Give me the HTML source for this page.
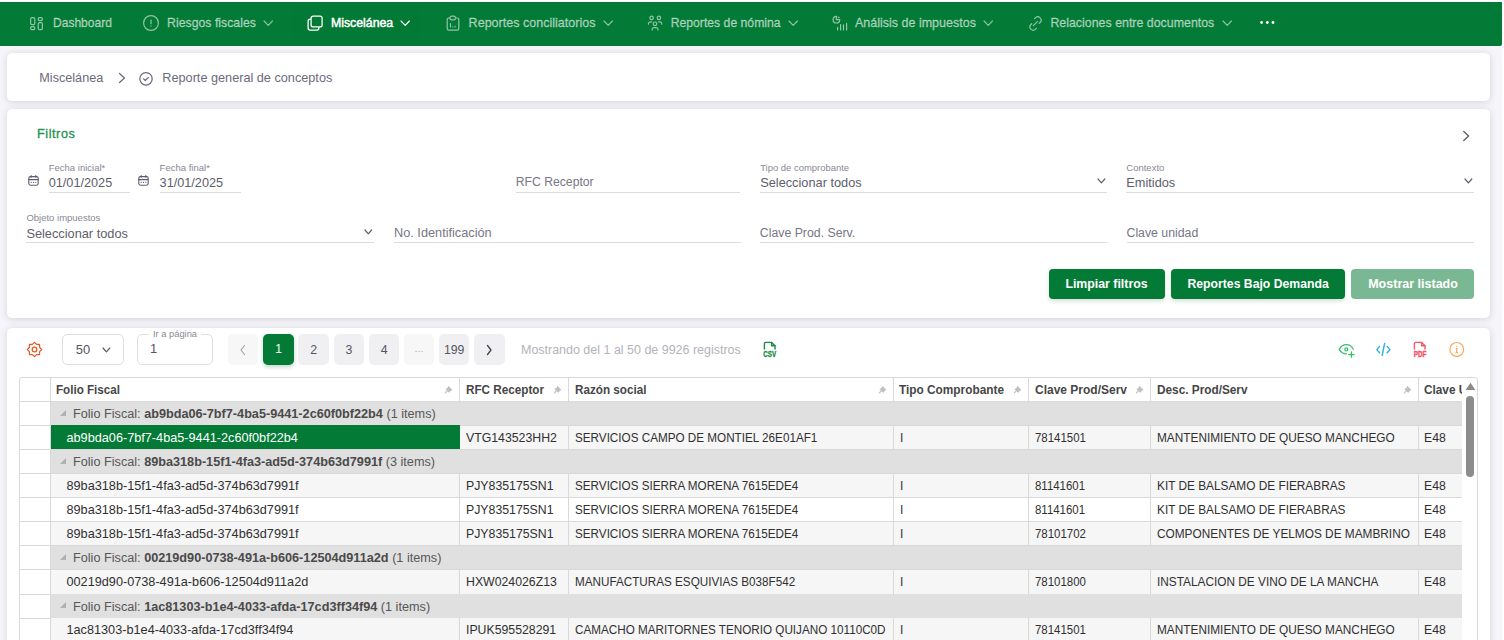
<!DOCTYPE html>
<html><head><meta charset="utf-8"><title>Reporte general de conceptos</title>
<style>
html,body{margin:0;padding:0;}
body{width:1504px;height:640px;overflow:hidden;position:relative;background:#f5f4f8;font-family:"Liberation Sans",sans-serif;}
.t{position:absolute;white-space:nowrap;line-height:1;}
.r{position:absolute;box-sizing:border-box;}
svg.r{overflow:visible;}
</style></head><body>
<div class="r" style="left:0px;top:0px;width:1504.00px;height:640.00px;background:#fff"></div>
<div class="r" style="left:0px;top:2px;width:1502.00px;height:638.00px;background:#f6f5f9"></div>
<div class="r" style="left:0px;top:2px;width:1502.00px;height:44.00px;background:#037b36;border-radius:0 0 2px 0"></div>
<div class="r" style="left:294px;top:6px;width:127.50px;height:34.00px;background:rgba(0,0,0,0.012);border-radius:3px"></div>
<svg class="r" style="left:29px;top:16px;" width="15" height="15" viewBox="0 0 15 15" fill="none"><g stroke="rgba(255,255,255,0.56)" stroke-width="1.2"><rect x="1.6" y="1.6" width="4.2" height="7" rx="1.3"/><rect x="1.6" y="10.6" width="4.2" height="3" rx="1.3"/><rect x="9.2" y="1.6" width="4.2" height="3" rx="1.3"/><rect x="9.2" y="6.6" width="4.2" height="7" rx="1.3"/></g></svg>
<div class="t" style="left:53.00px;top:16.97px;font-size:12.06px;color:rgba(255,255,255,0.56);font-weight:400;-webkit-text-stroke:0.3px rgba(255,255,255,0.56)">Dashboard</div>
<svg class="r" style="left:142px;top:14px;" width="18" height="18" viewBox="0 0 18 18" fill="none"><g stroke="rgba(255,255,255,0.56)" stroke-width="1.2" stroke-linecap="round"><circle cx="9" cy="9" r="7.4"/><path d="M9 6.2 V9.8"/><path d="M9 12.1 V12.2"/></g></svg>
<div class="t" style="left:167.00px;top:16.84px;font-size:12.32px;color:rgba(255,255,255,0.56);font-weight:400;-webkit-text-stroke:0.3px rgba(255,255,255,0.56)">Riesgos fiscales</div>
<svg class="r" style="left:263px;top:19.5px;" width="10.4" height="6.4" viewBox="0 0 10.4 6.4" fill="none"><path d="M1 1 L5.2 5.4 L9.4 1" stroke="rgba(255,255,255,0.56)" stroke-width="1.15" stroke-linecap="round" stroke-linejoin="round"/></svg>
<svg class="r" style="left:306px;top:14px;" width="18" height="18" viewBox="0 0 18 18" fill="none"><g stroke="#fff" stroke-width="1.25"><rect x="5.1" y="2.1" width="11" height="10.8" rx="2"/><path d="M5.1 5.1 H4.1 A2 2 0 0 0 2.1 7.1 V14.1 A2 2 0 0 0 4.1 16.1 H10.9 A2 2 0 0 0 12.9 14.1 V12.9"/></g></svg>
<div class="t" style="left:331.00px;top:16.85px;font-size:12.3px;color:#fff;font-weight:400;-webkit-text-stroke:0.45px #fff">Miscelánea</div>
<svg class="r" style="left:400px;top:19.5px;" width="10.4" height="6.4" viewBox="0 0 10.4 6.4" fill="none"><path d="M1 1 L5.2 5.4 L9.4 1" stroke="#fff" stroke-width="1.15" stroke-linecap="round" stroke-linejoin="round"/></svg>
<svg class="r" style="left:445px;top:14px;" width="16" height="18" viewBox="0 0 16 18" fill="none"><g stroke="rgba(255,255,255,0.56)" stroke-width="1.2" stroke-linecap="round"><path d="M4.5 4 H3.8 A1.6 1.6 0 0 0 2.2 5.6 V14.6 A1.6 1.6 0 0 0 3.8 16.2 H12.2 A1.6 1.6 0 0 0 13.8 14.6 V5.6 A1.6 1.6 0 0 0 12.2 4 H11.5"/><rect x="5" y="2.2" width="5.4" height="3.6" rx="1.6"/><path d="M5.5 9.6 V12.9 M7.8 12.9 V12.9 M10 12.2 V12.9"/></g></svg>
<div class="t" style="left:468.60px;top:16.73px;font-size:12.55px;color:rgba(255,255,255,0.56);font-weight:400;-webkit-text-stroke:0.3px rgba(255,255,255,0.56)">Reportes conciliatorios</div>
<svg class="r" style="left:603px;top:19.5px;" width="10.4" height="6.4" viewBox="0 0 10.4 6.4" fill="none"><path d="M1 1 L5.2 5.4 L9.4 1" stroke="rgba(255,255,255,0.56)" stroke-width="1.15" stroke-linecap="round" stroke-linejoin="round"/></svg>
<svg class="r" style="left:646px;top:14px;" width="18" height="18" viewBox="0 0 18 18" fill="none"><g stroke="rgba(255,255,255,0.56)" stroke-width="1.2" stroke-linecap="round"><circle cx="5.6" cy="3.9" r="1.7"/><circle cx="12.9" cy="3.9" r="1.7"/><circle cx="9" cy="9.8" r="1.8"/><path d="M2.4 10.2 A2.2 2.2 0 0 1 4.8 7.8 H5.6"/><path d="M12.6 7.8 H13.4 A2.2 2.2 0 0 1 15.8 10.2"/><path d="M6.2 16 V15.4 A1.8 1.8 0 0 1 8 13.6 H10.2 A1.8 1.8 0 0 1 12 15.4 V16"/></g></svg>
<div class="t" style="left:670.70px;top:16.89px;font-size:12.21px;color:rgba(255,255,255,0.56);font-weight:400;-webkit-text-stroke:0.3px rgba(255,255,255,0.56)">Reportes de nómina</div>
<svg class="r" style="left:787.5px;top:19.5px;" width="10.4" height="6.4" viewBox="0 0 10.4 6.4" fill="none"><path d="M1 1 L5.2 5.4 L9.4 1" stroke="rgba(255,255,255,0.56)" stroke-width="1.15" stroke-linecap="round" stroke-linejoin="round"/></svg>
<svg class="r" style="left:831px;top:14px;" width="18" height="18" viewBox="0 0 18 18" fill="none"><g stroke="rgba(255,255,255,0.56)" stroke-width="1.2" stroke-linecap="round"><path d="M5.4 2.4 A3.3 3.3 0 1 0 8.7 5.7 H5.4 Z"/><path d="M7.4 3 V3.5 H8.2"/><path d="M6.6 13.4 V15.9 M9.6 10.6 V15.9 M12.5 10.8 V15.9 M15.6 9.4 V15.9"/></g></svg>
<div class="t" style="left:855.00px;top:16.75px;font-size:12.51px;color:rgba(255,255,255,0.56);font-weight:400;-webkit-text-stroke:0.3px rgba(255,255,255,0.56)">Análisis de impuestos</div>
<svg class="r" style="left:983px;top:19.5px;" width="10.4" height="6.4" viewBox="0 0 10.4 6.4" fill="none"><path d="M1 1 L5.2 5.4 L9.4 1" stroke="rgba(255,255,255,0.56)" stroke-width="1.15" stroke-linecap="round" stroke-linejoin="round"/></svg>
<svg class="r" style="left:1027px;top:15px;" width="17" height="17" viewBox="0 0 17 17" fill="none"><g stroke="rgba(255,255,255,0.56)" stroke-width="1.2" stroke-linecap="round"><path d="M6.3 10.7 L10.7 6.3"/><path d="M7.6 3.6 L8.4 2.8 A3.3 3.3 0 0 1 13.1 7.5 L12.3 8.3"/><path d="M9.4 13.4 L8.6 14.2 A3.3 3.3 0 0 1 3.9 9.5 L4.7 8.7"/></g></svg>
<div class="t" style="left:1050.40px;top:16.80px;font-size:12.4px;color:rgba(255,255,255,0.56);font-weight:400;-webkit-text-stroke:0.3px rgba(255,255,255,0.56)">Relaciones entre documentos</div>
<svg class="r" style="left:1222px;top:19.5px;" width="10.4" height="6.4" viewBox="0 0 10.4 6.4" fill="none"><path d="M1 1 L5.2 5.4 L9.4 1" stroke="rgba(255,255,255,0.56)" stroke-width="1.15" stroke-linecap="round" stroke-linejoin="round"/></svg>
<svg class="r" style="left:1259px;top:20px;" width="17" height="5" viewBox="0 0 17 5" fill="none"><g fill="#fff"><circle cx="2.6" cy="2.5" r="1.4"/><circle cx="8.3" cy="2.5" r="1.4"/><circle cx="14" cy="2.5" r="1.4"/></g></svg>
<div class="r" style="left:7px;top:53px;width:1483.00px;height:48.00px;background:#fff;border-radius:5px;box-shadow:0 1px 7px rgba(40,40,70,0.17)"></div>
<div class="t" style="left:39.30px;top:72.17px;font-size:12.65px;color:#6c6a7d;font-weight:400;">Miscelánea</div>
<svg class="r" style="left:116px;top:71px;" width="12" height="14" viewBox="0 0 12 14" fill="none"><path d="M3.5 2.5 L8.5 7 L3.5 11.5" stroke="#6c6a7d" stroke-width="1.3" stroke-linecap="round" stroke-linejoin="round"/></svg>
<svg class="r" style="left:138px;top:71px;" width="16" height="16" viewBox="0 0 16 16" fill="none"><g stroke="#6c6a7d" stroke-width="1.25" stroke-linecap="round" stroke-linejoin="round"><circle cx="8" cy="7.8" r="6.2"/><path d="M5.6 7.9 L7.3 9.5 L10.4 6.4"/></g></svg>
<div class="t" style="left:162.30px;top:72.16px;font-size:12.69px;color:#6c6a7d;font-weight:400;">Reporte general de conceptos</div>
<div class="r" style="left:7px;top:109px;width:1483.00px;height:209.00px;background:#fff;border-radius:5px;box-shadow:0 1px 7px rgba(40,40,70,0.17)"></div>
<div class="t" style="left:37.00px;top:127.95px;font-size:12.7px;color:#23924f;font-weight:400;-webkit-text-stroke:0.3px #23924f;letter-spacing:0.55px">Filtros</div>
<svg class="r" style="left:1460px;top:129px;" width="12" height="14" viewBox="0 0 12 14" fill="none"><path d="M3.8 2.5 L8.6 7 L3.8 11.5" stroke="#5a5a66" stroke-width="1.3" stroke-linecap="round" stroke-linejoin="round"/></svg>
<svg class="r" style="left:27.5px;top:174.5px;" width="11" height="11" viewBox="0 0 11 11" fill="none"><g stroke="#5e5d6c" stroke-width="1.1" stroke-linecap="round"><rect x="0.8" y="1.6" width="9.4" height="8.6" rx="1.6"/><path d="M0.8 4.6 H10.2"/><path d="M3.2 0.6 V2.2 M7.8 0.6 V2.2"/><path d="M3.2 7.2 V7.5 M5.5 7.2 V7.5 M7.8 7.2 V7.5"/></g></svg>
<div class="t" style="left:48.70px;top:162.83px;font-size:9.53px;color:#8a8896;font-weight:400;">Fecha inicial*</div>
<div class="t" style="left:48.70px;top:177.46px;font-size:12.69px;color:#5e5d6c;font-weight:400;">01/01/2025</div>
<div class="r" style="left:48.7px;top:192px;width:81.30px;height:1.00px;background:#dcdcdf"></div>
<svg class="r" style="left:137.5px;top:174.5px;" width="11" height="11" viewBox="0 0 11 11" fill="none"><g stroke="#5e5d6c" stroke-width="1.1" stroke-linecap="round"><rect x="0.8" y="1.6" width="9.4" height="8.6" rx="1.6"/><path d="M0.8 4.6 H10.2"/><path d="M3.2 0.6 V2.2 M7.8 0.6 V2.2"/><path d="M3.2 7.2 V7.5 M5.5 7.2 V7.5 M7.8 7.2 V7.5"/></g></svg>
<div class="t" style="left:159.60px;top:162.83px;font-size:9.53px;color:#8a8896;font-weight:400;">Fecha final*</div>
<div class="t" style="left:159.60px;top:177.46px;font-size:12.69px;color:#5e5d6c;font-weight:400;">31/01/2025</div>
<div class="r" style="left:159.6px;top:192px;width:81.40px;height:1.00px;background:#dcdcdf"></div>
<div class="t" style="left:515.70px;top:176.00px;font-size:12.21px;color:#777686;font-weight:400;">RFC Receptor</div>
<div class="r" style="left:515.7px;top:192px;width:224.80px;height:1.00px;background:#dcdcdf"></div>
<div class="t" style="left:760.20px;top:162.88px;font-size:9.45px;color:#8a8896;font-weight:400;">Tipo de comprobante</div>
<div class="t" style="left:760.20px;top:177.22px;font-size:12.77px;color:#5e5d6c;font-weight:400;">Seleccionar todos</div>
<svg class="r" style="left:1096.8px;top:177.5px;" width="8.8" height="5.8" viewBox="0 0 8.8 5.8" fill="none"><path d="M1 1 L4.4 4.8 L7.8 1" stroke="#5e5d6c" stroke-width="1.2" stroke-linecap="round" stroke-linejoin="round"/></svg>
<div class="r" style="left:760.2px;top:192px;width:346.50px;height:1.00px;background:#dcdcdf"></div>
<div class="t" style="left:1126.30px;top:162.85px;font-size:9.5px;color:#8a8896;font-weight:400;">Contexto</div>
<div class="t" style="left:1126.30px;top:177.21px;font-size:12.78px;color:#5e5d6c;font-weight:400;">Emitidos</div>
<svg class="r" style="left:1464.2px;top:177.5px;" width="8.8" height="5.8" viewBox="0 0 8.8 5.8" fill="none"><path d="M1 1 L4.4 4.8 L7.8 1" stroke="#5e5d6c" stroke-width="1.2" stroke-linecap="round" stroke-linejoin="round"/></svg>
<div class="r" style="left:1126.3px;top:192px;width:347.70px;height:1.00px;background:#dcdcdf"></div>
<div class="t" style="left:26.40px;top:213.15px;font-size:9.51px;color:#8a8896;font-weight:400;">Objeto impuestos</div>
<div class="t" style="left:26.40px;top:227.81px;font-size:12.77px;color:#5e5d6c;font-weight:400;">Seleccionar todos</div>
<svg class="r" style="left:364px;top:228.5px;" width="8.6" height="5.8" viewBox="0 0 8.6 5.8" fill="none"><path d="M1 1 L4.3 4.8 L7.6 1" stroke="#5e5d6c" stroke-width="1.2" stroke-linecap="round" stroke-linejoin="round"/></svg>
<div class="r" style="left:26.4px;top:242px;width:347.20px;height:1.00px;background:#dcdcdf"></div>
<div class="t" style="left:394.00px;top:227.43px;font-size:12.74px;color:#777686;font-weight:400;">No. Identificación</div>
<div class="r" style="left:394px;top:242px;width:346.50px;height:1.00px;background:#dcdcdf"></div>
<div class="t" style="left:759.80px;top:227.15px;font-size:12.3px;color:#777686;font-weight:400;">Clave Prod. Serv.</div>
<div class="r" style="left:759.8px;top:242px;width:347.40px;height:1.00px;background:#dcdcdf"></div>
<div class="t" style="left:1126.50px;top:227.15px;font-size:12.3px;color:#777686;font-weight:400;">Clave unidad</div>
<div class="r" style="left:1126.5px;top:242px;width:347.50px;height:1.00px;background:#dcdcdf"></div>
<div class="r" style="left:1049px;top:269px;width:115.80px;height:30.00px;background:#037b36;border-radius:4px;box-shadow:0 2px 4px rgba(0,80,30,0.18)"></div><div class="t" style="left:1065.40px;top:278.23px;font-size:12.34px;color:#fff;font-weight:700;">Limpiar filtros</div>
<div class="r" style="left:1171px;top:269px;width:173.60px;height:30.00px;background:#037b36;border-radius:4px;box-shadow:0 2px 4px rgba(0,80,30,0.18)"></div><div class="t" style="left:1187.50px;top:278.29px;font-size:12.22px;color:#fff;font-weight:700;">Reportes Bajo Demanda</div>
<div class="r" style="left:1351.2px;top:269px;width:122.70px;height:30.00px;background:#7ab893;border-radius:4px;"></div><div class="t" style="left:1368.20px;top:278.13px;font-size:12.53px;color:#fff;font-weight:700;">Mostrar listado</div>
<div class="r" style="left:7px;top:328px;width:1483.00px;height:372.00px;background:#fff;border-radius:5px;box-shadow:0 1px 7px rgba(40,40,70,0.17)"></div>
<svg class="r" style="left:26px;top:341px;" width="17" height="17" viewBox="0 0 17 17" fill="none"><path d="M8.5 1.4 L10.6 3.4 L13.5 3.5 L13.6 6.4 L15.6 8.5 L13.6 10.6 L13.5 13.5 L10.6 13.6 L8.5 15.6 L6.4 13.6 L3.5 13.5 L3.4 10.6 L1.4 8.5 L3.4 6.4 L3.5 3.5 L6.4 3.4 Z" stroke="#e85a28" stroke-width="1.3" stroke-linejoin="round"/><circle cx="8.5" cy="8.5" r="2.3" stroke="#e85a28" stroke-width="1.3"/></svg>
<div class="r" style="left:62.3px;top:334.4px;width:61.40px;height:30.30px;border:1px solid #dedee2;border-radius:5px;background:#fff"></div>
<div class="t" style="left:75.80px;top:343.62px;font-size:12.95px;color:#55555f;font-weight:400;">50</div>
<svg class="r" style="left:102.2px;top:347px;" width="8.8" height="5.8" viewBox="0 0 8.8 5.8" fill="none"><path d="M1 1 L4.4 4.8 L7.8 1" stroke="#55555f" stroke-width="1.15" stroke-linecap="round" stroke-linejoin="round"/></svg>
<div class="r" style="left:137.3px;top:334.4px;width:75.30px;height:30.30px;border:1px solid #dedee2;border-radius:5px;background:#fff"></div>
<div class="r" style="left:149px;top:330px;width:52.00px;height:8.00px;background:#fff"></div>
<div class="t" style="left:152.90px;top:330.32px;font-size:9.35px;color:#8a8a94;font-weight:400;">Ir a página</div>
<div class="t" style="left:150.00px;top:343.22px;font-size:12.95px;color:#55555f;font-weight:400;">1</div>
<div class="r" style="left:228px;top:334.4px;width:30.40px;height:30.50px;background:#f7f7f8;border-radius:5px"></div>
<svg class="r" style="left:238px;top:343px;" width="10" height="14" viewBox="0 0 10 14" fill="none"><path d="M6.5 2.5 L3 7 L6.5 11.5" stroke="#a6a6ae" stroke-width="1.2" stroke-linecap="round" stroke-linejoin="round"/></svg>
<div class="r" style="left:263.3px;top:334.4px;width:30.40px;height:30.50px;background:#037b36;border-radius:5px;box-shadow:0 2px 4px rgba(0,90,40,0.25)"></div>
<div class="t" style="left:263.3px;top:342.5px;width:30.4px;text-align:center;font-size:12px;color:#fff">1</div>
<div class="r" style="left:298.4px;top:334.4px;width:30.40px;height:30.50px;background:#f0f0f2;border-radius:5px"></div>
<div class="t" style="left:298.4px;top:343.8px;width:30.4px;text-align:center;font-size:12.3px;color:#55555f">2</div>
<div class="r" style="left:333.7px;top:334.4px;width:30.40px;height:30.50px;background:#f0f0f2;border-radius:5px"></div>
<div class="t" style="left:333.7px;top:343.8px;width:30.4px;text-align:center;font-size:12.3px;color:#55555f">3</div>
<div class="r" style="left:369px;top:334.4px;width:30.40px;height:30.50px;background:#f0f0f2;border-radius:5px"></div>
<div class="t" style="left:369px;top:343.8px;width:30.4px;text-align:center;font-size:12.3px;color:#55555f">4</div>
<div class="r" style="left:403.9px;top:334.4px;width:30.40px;height:30.50px;background:#f7f7f8;border-radius:5px"></div>
<div class="t" style="left:403.9px;top:342.5px;width:30.4px;text-align:center;font-size:11px;color:#b0b0b8">...</div>
<div class="r" style="left:439px;top:334.4px;width:30.40px;height:30.50px;background:#f0f0f2;border-radius:5px"></div>
<div class="t" style="left:439px;top:343.8px;width:30.4px;text-align:center;font-size:12.3px;color:#55555f">199</div>
<div class="r" style="left:474.3px;top:334.4px;width:30.40px;height:30.50px;background:#f0f0f2;border-radius:5px"></div>
<svg class="r" style="left:484.3px;top:343px;" width="10" height="14" viewBox="0 0 10 14" fill="none"><path d="M3.5 2.5 L7 7 L3.5 11.5" stroke="#44444e" stroke-width="1.3" stroke-linecap="round" stroke-linejoin="round"/></svg>
<div class="t" style="left:521.00px;top:343.76px;font-size:12.48px;color:#b3b3bb;font-weight:400;">Mostrando del 1 al 50 de 9926 registros</div>
<svg class="r" style="left:762px;top:341px;" width="16" height="17" viewBox="0 0 16 17" fill="none"><g stroke="#1b8a45" stroke-width="1.4" stroke-linecap="round" stroke-linejoin="round"><path d="M2.4 8 V2.6 A1.2 1.2 0 0 1 3.6 1.4 H9.6 L13 4.8 V8"/><path d="M9.6 1.4 V4.8 H13"/></g><text x="1.2" y="16.2" textLength="13" lengthAdjust="spacingAndGlyphs" font-family="Liberation Sans" font-weight="700" font-size="8.2" fill="#1b8a45" stroke="#1b8a45" stroke-width="0.3">CSV</text></svg>
<svg class="r" style="left:1334px;top:338px;" width="24" height="22" viewBox="0 0 24 22" fill="none"><g stroke="#36c170" stroke-width="1.3" stroke-linecap="round" stroke-linejoin="round"><path d="M12.4 15.9 C9.4 15.9 6.9 14.4 5.2 11.4 C7 8.3 9.5 6.7 12.3 6.7 C15.2 6.7 17.6 8.2 19.3 11.2"/><circle cx="12.3" cy="11.4" r="1.45"/><path d="M17.4 13.9 V19.3 M14.7 16.6 H20.1"/></g></svg>
<svg class="r" style="left:1375px;top:341px;" width="17" height="17" viewBox="0 0 17 17" fill="none"><g stroke="#2bb3d4" stroke-width="1.4" stroke-linecap="round" stroke-linejoin="round"><path d="M4.6 5.4 L1.8 8.6 L4.6 11.8"/><path d="M12.2 5.4 L15 8.6 L12.2 11.8"/><path d="M9.6 2.4 L7.2 14.4"/></g></svg>
<svg class="r" style="left:1412px;top:341px;" width="16" height="17" viewBox="0 0 16 17" fill="none"><g stroke="#f4566a" stroke-width="1.4" stroke-linecap="round" stroke-linejoin="round"><path d="M2.4 8 V2.6 A1.2 1.2 0 0 1 3.6 1.4 H9.6 L13 4.8 V8"/><path d="M9.6 1.4 V4.8 H13"/></g><text x="1.7" y="16.1" textLength="12.6" lengthAdjust="spacingAndGlyphs" font-family="Liberation Sans" font-weight="700" font-size="8.6" fill="#f4566a" stroke="#f4566a" stroke-width="0.45">PDF</text></svg>
<svg class="r" style="left:1448px;top:341px;" width="17" height="17" viewBox="0 0 17 17" fill="none"><g stroke="#f8a75c" stroke-width="1.2" stroke-linecap="round"><circle cx="8.8" cy="8.4" r="6.9"/><path d="M8.8 7.6 V11.4 M8 11.4 H9.6 M8.1 7.6 H8.8"/><path d="M8.8 5.3 V5.35"/></g></svg>
<div class="r" style="left:19px;top:377px;width:1458.50px;height:323.00px;border:1px solid #d9d9d9;border-radius:3px;background:#fff"></div>
<div class="r" style="left:19px;top:401px;width:1443.50px;height:1.00px;background:#d9d9d9"></div>
<div class="r" style="left:49.5px;top:377px;width:1.00px;height:24.00px;background:#d9d9d9"></div>
<div class="r" style="left:459.0px;top:377px;width:1.00px;height:24.00px;background:#d9d9d9"></div>
<div class="r" style="left:568.0px;top:377px;width:1.00px;height:24.00px;background:#d9d9d9"></div>
<div class="r" style="left:892.8px;top:377px;width:1.00px;height:24.00px;background:#d9d9d9"></div>
<div class="r" style="left:1028.0px;top:377px;width:1.00px;height:24.00px;background:#d9d9d9"></div>
<div class="r" style="left:1150.1px;top:377px;width:1.00px;height:24.00px;background:#d9d9d9"></div>
<div class="r" style="left:1417.5px;top:377px;width:1.00px;height:24.00px;background:#d9d9d9"></div>
<div class="t" style="left:56.00px;top:384.05px;font-size:12.5px;color:#464646;font-weight:700;transform:scaleX(0.9304);transform-origin:0 0;">Folio Fiscal</div>
<svg class="r" style="left:445.0px;top:385px;" width="9" height="9" viewBox="0 0 9 9" fill="none"><path d="M3.2 0.8 L7.6 5 L6.2 5.4 L4.6 7.2 L4.4 8 L0.4 4 L1.2 3.8 L2.9 2.3 Z" fill="#c0c0c0"/><path d="M2.2 6 L0.4 7.8" stroke="#c0c0c0" stroke-width="1.2" stroke-linecap="round"/></svg>
<div class="t" style="left:465.50px;top:384.05px;font-size:12.5px;color:#464646;font-weight:700;transform:scaleX(0.9360);transform-origin:0 0;">RFC Receptor</div>
<svg class="r" style="left:554.0px;top:385px;" width="9" height="9" viewBox="0 0 9 9" fill="none"><path d="M3.2 0.8 L7.6 5 L6.2 5.4 L4.6 7.2 L4.4 8 L0.4 4 L1.2 3.8 L2.9 2.3 Z" fill="#c0c0c0"/><path d="M2.2 6 L0.4 7.8" stroke="#c0c0c0" stroke-width="1.2" stroke-linecap="round"/></svg>
<div class="t" style="left:574.50px;top:384.05px;font-size:12.5px;color:#464646;font-weight:700;transform:scaleX(0.9360);transform-origin:0 0;">Razón social</div>
<svg class="r" style="left:878.8px;top:385px;" width="9" height="9" viewBox="0 0 9 9" fill="none"><path d="M3.2 0.8 L7.6 5 L6.2 5.4 L4.6 7.2 L4.4 8 L0.4 4 L1.2 3.8 L2.9 2.3 Z" fill="#c0c0c0"/><path d="M2.2 6 L0.4 7.8" stroke="#c0c0c0" stroke-width="1.2" stroke-linecap="round"/></svg>
<div class="t" style="left:899.30px;top:384.05px;font-size:12.5px;color:#464646;font-weight:700;transform:scaleX(0.9472);transform-origin:0 0;">Tipo Comprobante</div>
<svg class="r" style="left:1014.0px;top:385px;" width="9" height="9" viewBox="0 0 9 9" fill="none"><path d="M3.2 0.8 L7.6 5 L6.2 5.4 L4.6 7.2 L4.4 8 L0.4 4 L1.2 3.8 L2.9 2.3 Z" fill="#c0c0c0"/><path d="M2.2 6 L0.4 7.8" stroke="#c0c0c0" stroke-width="1.2" stroke-linecap="round"/></svg>
<div class="t" style="left:1034.50px;top:384.05px;font-size:12.5px;color:#464646;font-weight:700;transform:scaleX(0.9592);transform-origin:0 0;">Clave Prod/Serv</div>
<svg class="r" style="left:1136.1px;top:385px;" width="9" height="9" viewBox="0 0 9 9" fill="none"><path d="M3.2 0.8 L7.6 5 L6.2 5.4 L4.6 7.2 L4.4 8 L0.4 4 L1.2 3.8 L2.9 2.3 Z" fill="#c0c0c0"/><path d="M2.2 6 L0.4 7.8" stroke="#c0c0c0" stroke-width="1.2" stroke-linecap="round"/></svg>
<div class="t" style="left:1156.60px;top:384.05px;font-size:12.5px;color:#464646;font-weight:700;transform:scaleX(0.9440);transform-origin:0 0;">Desc. Prod/Serv</div>
<svg class="r" style="left:1403.5px;top:385px;" width="9" height="9" viewBox="0 0 9 9" fill="none"><path d="M3.2 0.8 L7.6 5 L6.2 5.4 L4.6 7.2 L4.4 8 L0.4 4 L1.2 3.8 L2.9 2.3 Z" fill="#c0c0c0"/><path d="M2.2 6 L0.4 7.8" stroke="#c0c0c0" stroke-width="1.2" stroke-linecap="round"/></svg>
<div class="r" style="left:1419px;top:378px;width:43.40px;height:23px;overflow:hidden"><div class="t" style="left:5.00px;top:6.05px;font-size:12.5px;color:#464646;font-weight:700;transform:scaleX(0.9440);transform-origin:0 0;">Clave Unidad</div></div>
<div class="r" style="left:1462.4px;top:378px;width:13.80px;height:322.00px;background:#fff"></div>
<div class="r" style="left:50px;top:401.6px;width:1412.40px;height:24.05px;background:#e0e0e0"></div>
<svg class="r" style="left:58.5px;top:408.6px;" width="8" height="8" viewBox="0 0 8 8" fill="none"><path d="M7 1 V7 H1 Z" fill="#b0b0b0"/></svg>
<div class="t" style="left:73.00px;top:408.16px;font-size:12.68px;color:#575757;font-weight:400;">Folio Fiscal: <b style="color:#4a4a4a">ab9bda06-7bf7-4ba5-9441-2c60f0bf22b4</b> (1 items)</div>
<div class="r" style="left:19px;top:425.15000000000003px;width:1443.40px;height:1.00px;background:#d9d9d9"></div>
<div class="r" style="left:50px;top:425.65000000000003px;width:1412.40px;height:24.05px;background:#f6f6f6"></div>
<div class="r" style="left:459.0px;top:425.65000000000003px;width:1.00px;height:24.05px;background:#d9d9d9"></div>
<div class="t" style="left:465.80px;top:432.03px;font-size:12.65px;color:#303030;font-weight:400;transform:scaleX(0.9723);transform-origin:0 0;">VTG143523HH2</div>
<div class="r" style="left:568.0px;top:425.65000000000003px;width:1.00px;height:24.05px;background:#d9d9d9"></div>
<div class="t" style="left:574.80px;top:432.03px;font-size:12.65px;color:#303030;font-weight:400;transform:scaleX(0.9249);transform-origin:0 0;">SERVICIOS CAMPO DE MONTIEL 26E01AF1</div>
<div class="r" style="left:892.8px;top:425.65000000000003px;width:1.00px;height:24.05px;background:#d9d9d9"></div>
<div class="t" style="left:899.60px;top:432.03px;font-size:12.65px;color:#303030;font-weight:400;transform:scaleX(0.9486);transform-origin:0 0;">I</div>
<div class="r" style="left:1028.0px;top:425.65000000000003px;width:1.00px;height:24.05px;background:#d9d9d9"></div>
<div class="t" style="left:1034.80px;top:432.03px;font-size:12.65px;color:#303030;font-weight:400;transform:scaleX(0.9051);transform-origin:0 0;">78141501</div>
<div class="r" style="left:1150.1px;top:425.65000000000003px;width:1.00px;height:24.05px;background:#d9d9d9"></div>
<div class="t" style="left:1156.90px;top:432.03px;font-size:12.65px;color:#303030;font-weight:400;transform:scaleX(0.9360);transform-origin:0 0;">MANTENIMIENTO DE QUESO MANCHEGO</div>
<div class="r" style="left:1417.5px;top:425.65000000000003px;width:1.00px;height:24.05px;background:#d9d9d9"></div>
<div class="t" style="left:1424.30px;top:432.03px;font-size:12.65px;color:#303030;font-weight:400;transform:scaleX(0.9684);transform-origin:0 0;">E48</div>
<div class="r" style="left:19px;top:449.20000000000005px;width:1443.40px;height:1.00px;background:#d9d9d9"></div>
<div class="r" style="left:50px;top:449.70000000000005px;width:1412.40px;height:24.05px;background:#e0e0e0"></div>
<svg class="r" style="left:58.5px;top:456.70000000000005px;" width="8" height="8" viewBox="0 0 8 8" fill="none"><path d="M7 1 V7 H1 Z" fill="#b0b0b0"/></svg>
<div class="t" style="left:73.00px;top:456.26px;font-size:12.68px;color:#575757;font-weight:400;">Folio Fiscal: <b style="color:#4a4a4a">89ba318b-15f1-4fa3-ad5d-374b63d7991f</b> (3 items)</div>
<div class="r" style="left:19px;top:473.25000000000006px;width:1443.40px;height:1.00px;background:#d9d9d9"></div>
<div class="r" style="left:50px;top:473.75000000000006px;width:1412.40px;height:24.05px;background:#f6f6f6"></div>
<div class="t" style="left:66.50px;top:480.10px;font-size:12.7px;color:#303030;font-weight:400;">89ba318b-15f1-4fa3-ad5d-374b63d7991f</div>
<div class="r" style="left:459.0px;top:473.75000000000006px;width:1.00px;height:24.05px;background:#d9d9d9"></div>
<div class="t" style="left:465.80px;top:480.13px;font-size:12.65px;color:#303030;font-weight:400;transform:scaleX(0.9723);transform-origin:0 0;">PJY835175SN1</div>
<div class="r" style="left:568.0px;top:473.75000000000006px;width:1.00px;height:24.05px;background:#d9d9d9"></div>
<div class="t" style="left:574.80px;top:480.13px;font-size:12.65px;color:#303030;font-weight:400;transform:scaleX(0.9249);transform-origin:0 0;">SERVICIOS SIERRA MORENA 7615EDE4</div>
<div class="r" style="left:892.8px;top:473.75000000000006px;width:1.00px;height:24.05px;background:#d9d9d9"></div>
<div class="t" style="left:899.60px;top:480.13px;font-size:12.65px;color:#303030;font-weight:400;transform:scaleX(0.9486);transform-origin:0 0;">I</div>
<div class="r" style="left:1028.0px;top:473.75000000000006px;width:1.00px;height:24.05px;background:#d9d9d9"></div>
<div class="t" style="left:1034.80px;top:480.13px;font-size:12.65px;color:#303030;font-weight:400;transform:scaleX(0.9051);transform-origin:0 0;">81141601</div>
<div class="r" style="left:1150.1px;top:473.75000000000006px;width:1.00px;height:24.05px;background:#d9d9d9"></div>
<div class="t" style="left:1156.90px;top:480.13px;font-size:12.65px;color:#303030;font-weight:400;transform:scaleX(0.9360);transform-origin:0 0;">KIT DE BALSAMO DE FIERABRAS</div>
<div class="r" style="left:1417.5px;top:473.75000000000006px;width:1.00px;height:24.05px;background:#d9d9d9"></div>
<div class="t" style="left:1424.30px;top:480.13px;font-size:12.65px;color:#303030;font-weight:400;transform:scaleX(0.9684);transform-origin:0 0;">E48</div>
<div class="r" style="left:19px;top:497.30000000000007px;width:1443.40px;height:1.00px;background:#d9d9d9"></div>
<div class="r" style="left:50px;top:497.80000000000007px;width:1412.40px;height:24.05px;background:#fff"></div>
<div class="t" style="left:66.50px;top:504.15px;font-size:12.7px;color:#303030;font-weight:400;">89ba318b-15f1-4fa3-ad5d-374b63d7991f</div>
<div class="r" style="left:459.0px;top:497.80000000000007px;width:1.00px;height:24.05px;background:#d9d9d9"></div>
<div class="t" style="left:465.80px;top:504.18px;font-size:12.65px;color:#303030;font-weight:400;transform:scaleX(0.9723);transform-origin:0 0;">PJY835175SN1</div>
<div class="r" style="left:568.0px;top:497.80000000000007px;width:1.00px;height:24.05px;background:#d9d9d9"></div>
<div class="t" style="left:574.80px;top:504.18px;font-size:12.65px;color:#303030;font-weight:400;transform:scaleX(0.9249);transform-origin:0 0;">SERVICIOS SIERRA MORENA 7615EDE4</div>
<div class="r" style="left:892.8px;top:497.80000000000007px;width:1.00px;height:24.05px;background:#d9d9d9"></div>
<div class="t" style="left:899.60px;top:504.18px;font-size:12.65px;color:#303030;font-weight:400;transform:scaleX(0.9486);transform-origin:0 0;">I</div>
<div class="r" style="left:1028.0px;top:497.80000000000007px;width:1.00px;height:24.05px;background:#d9d9d9"></div>
<div class="t" style="left:1034.80px;top:504.18px;font-size:12.65px;color:#303030;font-weight:400;transform:scaleX(0.9051);transform-origin:0 0;">81141601</div>
<div class="r" style="left:1150.1px;top:497.80000000000007px;width:1.00px;height:24.05px;background:#d9d9d9"></div>
<div class="t" style="left:1156.90px;top:504.18px;font-size:12.65px;color:#303030;font-weight:400;transform:scaleX(0.9360);transform-origin:0 0;">KIT DE BALSAMO DE FIERABRAS</div>
<div class="r" style="left:1417.5px;top:497.80000000000007px;width:1.00px;height:24.05px;background:#d9d9d9"></div>
<div class="t" style="left:1424.30px;top:504.18px;font-size:12.65px;color:#303030;font-weight:400;transform:scaleX(0.9684);transform-origin:0 0;">E48</div>
<div class="r" style="left:19px;top:521.35px;width:1443.40px;height:1.00px;background:#d9d9d9"></div>
<div class="r" style="left:50px;top:521.85px;width:1412.40px;height:24.05px;background:#f6f6f6"></div>
<div class="t" style="left:66.50px;top:528.20px;font-size:12.7px;color:#303030;font-weight:400;">89ba318b-15f1-4fa3-ad5d-374b63d7991f</div>
<div class="r" style="left:459.0px;top:521.85px;width:1.00px;height:24.05px;background:#d9d9d9"></div>
<div class="t" style="left:465.80px;top:528.23px;font-size:12.65px;color:#303030;font-weight:400;transform:scaleX(0.9723);transform-origin:0 0;">PJY835175SN1</div>
<div class="r" style="left:568.0px;top:521.85px;width:1.00px;height:24.05px;background:#d9d9d9"></div>
<div class="t" style="left:574.80px;top:528.23px;font-size:12.65px;color:#303030;font-weight:400;transform:scaleX(0.9249);transform-origin:0 0;">SERVICIOS SIERRA MORENA 7615EDE4</div>
<div class="r" style="left:892.8px;top:521.85px;width:1.00px;height:24.05px;background:#d9d9d9"></div>
<div class="t" style="left:899.60px;top:528.23px;font-size:12.65px;color:#303030;font-weight:400;transform:scaleX(0.9486);transform-origin:0 0;">I</div>
<div class="r" style="left:1028.0px;top:521.85px;width:1.00px;height:24.05px;background:#d9d9d9"></div>
<div class="t" style="left:1034.80px;top:528.23px;font-size:12.65px;color:#303030;font-weight:400;transform:scaleX(0.9051);transform-origin:0 0;">78101702</div>
<div class="r" style="left:1150.1px;top:521.85px;width:1.00px;height:24.05px;background:#d9d9d9"></div>
<div class="t" style="left:1156.90px;top:528.23px;font-size:12.65px;color:#303030;font-weight:400;transform:scaleX(0.9360);transform-origin:0 0;">COMPONENTES DE YELMOS DE MAMBRINO</div>
<div class="r" style="left:1417.5px;top:521.85px;width:1.00px;height:24.05px;background:#d9d9d9"></div>
<div class="t" style="left:1424.30px;top:528.23px;font-size:12.65px;color:#303030;font-weight:400;transform:scaleX(0.9684);transform-origin:0 0;">E48</div>
<div class="r" style="left:19px;top:545.4px;width:1443.40px;height:1.00px;background:#d9d9d9"></div>
<div class="r" style="left:50px;top:545.9px;width:1412.40px;height:24.05px;background:#e0e0e0"></div>
<svg class="r" style="left:58.5px;top:552.9px;" width="8" height="8" viewBox="0 0 8 8" fill="none"><path d="M7 1 V7 H1 Z" fill="#b0b0b0"/></svg>
<div class="t" style="left:73.00px;top:552.46px;font-size:12.68px;color:#575757;font-weight:400;">Folio Fiscal: <b style="color:#4a4a4a">00219d90-0738-491a-b606-12504d911a2d</b> (1 items)</div>
<div class="r" style="left:19px;top:569.4499999999999px;width:1443.40px;height:1.00px;background:#d9d9d9"></div>
<div class="r" style="left:50px;top:569.9499999999999px;width:1412.40px;height:24.05px;background:#f6f6f6"></div>
<div class="t" style="left:66.50px;top:576.30px;font-size:12.7px;color:#303030;font-weight:400;">00219d90-0738-491a-b606-12504d911a2d</div>
<div class="r" style="left:459.0px;top:569.9499999999999px;width:1.00px;height:24.05px;background:#d9d9d9"></div>
<div class="t" style="left:465.80px;top:576.32px;font-size:12.65px;color:#303030;font-weight:400;transform:scaleX(0.9723);transform-origin:0 0;">HXW024026Z13</div>
<div class="r" style="left:568.0px;top:569.9499999999999px;width:1.00px;height:24.05px;background:#d9d9d9"></div>
<div class="t" style="left:574.80px;top:576.32px;font-size:12.65px;color:#303030;font-weight:400;transform:scaleX(0.9249);transform-origin:0 0;">MANUFACTURAS ESQUIVIAS B038F542</div>
<div class="r" style="left:892.8px;top:569.9499999999999px;width:1.00px;height:24.05px;background:#d9d9d9"></div>
<div class="t" style="left:899.60px;top:576.32px;font-size:12.65px;color:#303030;font-weight:400;transform:scaleX(0.9486);transform-origin:0 0;">I</div>
<div class="r" style="left:1028.0px;top:569.9499999999999px;width:1.00px;height:24.05px;background:#d9d9d9"></div>
<div class="t" style="left:1034.80px;top:576.32px;font-size:12.65px;color:#303030;font-weight:400;transform:scaleX(0.9051);transform-origin:0 0;">78101800</div>
<div class="r" style="left:1150.1px;top:569.9499999999999px;width:1.00px;height:24.05px;background:#d9d9d9"></div>
<div class="t" style="left:1156.90px;top:576.32px;font-size:12.65px;color:#303030;font-weight:400;transform:scaleX(0.9360);transform-origin:0 0;">INSTALACION DE VINO DE LA MANCHA</div>
<div class="r" style="left:1417.5px;top:569.9499999999999px;width:1.00px;height:24.05px;background:#d9d9d9"></div>
<div class="t" style="left:1424.30px;top:576.32px;font-size:12.65px;color:#303030;font-weight:400;transform:scaleX(0.9684);transform-origin:0 0;">E48</div>
<div class="r" style="left:19px;top:593.4999999999999px;width:1443.40px;height:1.00px;background:#d9d9d9"></div>
<div class="r" style="left:50px;top:593.9999999999999px;width:1412.40px;height:24.05px;background:#e0e0e0"></div>
<svg class="r" style="left:58.5px;top:600.9999999999999px;" width="8" height="8" viewBox="0 0 8 8" fill="none"><path d="M7 1 V7 H1 Z" fill="#b0b0b0"/></svg>
<div class="t" style="left:73.00px;top:600.56px;font-size:12.68px;color:#575757;font-weight:400;">Folio Fiscal: <b style="color:#4a4a4a">1ac81303-b1e4-4033-afda-17cd3ff34f94</b> (1 items)</div>
<div class="r" style="left:19px;top:617.5499999999998px;width:1443.40px;height:1.00px;background:#d9d9d9"></div>
<div class="r" style="left:50px;top:618.0499999999998px;width:1412.40px;height:24.05px;background:#f6f6f6"></div>
<div class="t" style="left:66.50px;top:624.40px;font-size:12.7px;color:#303030;font-weight:400;">1ac81303-b1e4-4033-afda-17cd3ff34f94</div>
<div class="r" style="left:459.0px;top:618.0499999999998px;width:1.00px;height:24.05px;background:#d9d9d9"></div>
<div class="t" style="left:465.80px;top:624.42px;font-size:12.65px;color:#303030;font-weight:400;transform:scaleX(0.9723);transform-origin:0 0;">IPUK595528291</div>
<div class="r" style="left:568.0px;top:618.0499999999998px;width:1.00px;height:24.05px;background:#d9d9d9"></div>
<div class="t" style="left:574.80px;top:624.42px;font-size:12.65px;color:#303030;font-weight:400;transform:scaleX(0.9249);transform-origin:0 0;">CAMACHO MARITORNES TENORIO QUIJANO 10110C0D</div>
<div class="r" style="left:892.8px;top:618.0499999999998px;width:1.00px;height:24.05px;background:#d9d9d9"></div>
<div class="t" style="left:899.60px;top:624.42px;font-size:12.65px;color:#303030;font-weight:400;transform:scaleX(0.9486);transform-origin:0 0;">I</div>
<div class="r" style="left:1028.0px;top:618.0499999999998px;width:1.00px;height:24.05px;background:#d9d9d9"></div>
<div class="t" style="left:1034.80px;top:624.42px;font-size:12.65px;color:#303030;font-weight:400;transform:scaleX(0.9051);transform-origin:0 0;">78141501</div>
<div class="r" style="left:1150.1px;top:618.0499999999998px;width:1.00px;height:24.05px;background:#d9d9d9"></div>
<div class="t" style="left:1156.90px;top:624.42px;font-size:12.65px;color:#303030;font-weight:400;transform:scaleX(0.9360);transform-origin:0 0;">MANTENIMIENTO DE QUESO MANCHEGO</div>
<div class="r" style="left:1417.5px;top:618.0499999999998px;width:1.00px;height:24.05px;background:#d9d9d9"></div>
<div class="t" style="left:1424.30px;top:624.42px;font-size:12.65px;color:#303030;font-weight:400;transform:scaleX(0.9684);transform-origin:0 0;">E48</div>
<div class="r" style="left:19px;top:641.5999999999998px;width:1443.40px;height:1.00px;background:#d9d9d9"></div>
<div class="r" style="left:49.5px;top:424.95000000000005px;width:410.50px;height:24.55px;background:#037b36"></div>
<div class="t" style="left:66.50px;top:432.00px;font-size:12.7px;color:#fff;font-weight:400;">ab9bda06-7bf7-4ba5-9441-2c60f0bf22b4</div>
<div class="r" style="left:49.5px;top:377px;width:1.00px;height:323.00px;background:#d9d9d9"></div>
<div class="r" style="left:1462.4px;top:378px;width:13.80px;height:322.00px;background:#fff"></div>
<svg class="r" style="left:1464.5px;top:382px;" width="11" height="9" viewBox="0 0 11 9" fill="none"><path d="M5.5 0.8 L10.4 8 H0.6 Z" fill="#8a8a8a"/></svg>
<div class="r" style="left:1466.4px;top:396px;width:7.60px;height:81.20px;background:#8c8c8c;border-radius:4px"></div>
</body></html>
